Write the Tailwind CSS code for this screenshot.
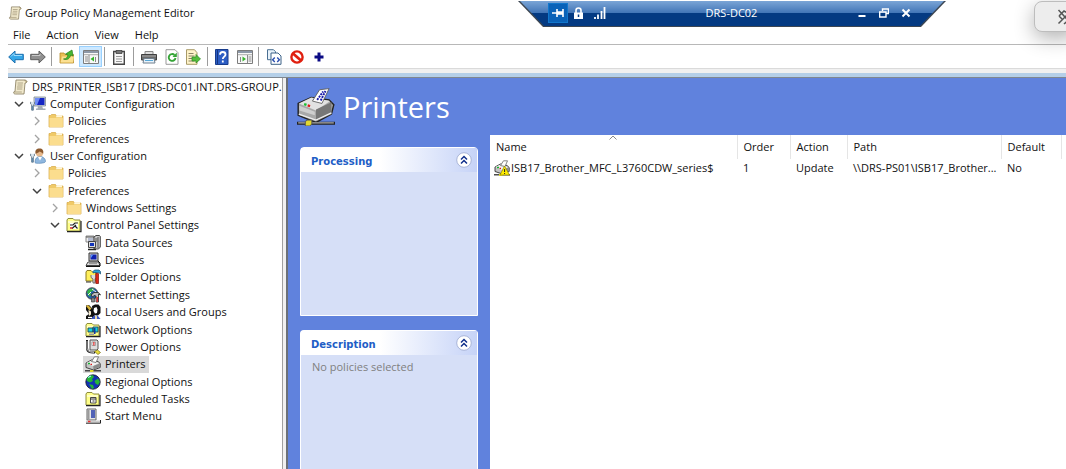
<!DOCTYPE html>
<html lang="en">
<head>
  <meta charset="UTF-8">
  <title>Group Policy Management Editor</title>
  <meta name="viewport" content="width=device-width, initial-scale=1.0">
  <script src="https://cdn.jsdelivr.net/npm/@tailwindcss/browser@4"></script>
</head>
<body class="relative flex flex-col h-screen overflow-hidden bg-white pl-2 font-['Open_Sans','Noto_Sans',sans-serif] text-[11px] leading-4 text-[#111]">

  <!-- shared icons -->
  <svg class="hidden">
    <symbol id="scroll" viewBox="0 0 16 16">
      <path d="M4 1h9.500l1.500 1.500-1 1.500h-1l-1 11H3.500C1 15 1 12.500 3 12.500Z" fill="#f1e9cc" stroke="#8f8468" stroke-width=".9"/>
      <path d="M12.500 1.500c2-.5 2.800 1.500 1.200 2.300" fill="#cfc092" stroke="#8f8468" stroke-width=".7"/>
      <path d="M5.500 4h5.500M5.500 6h5.200M5 8h5.500M5 10h5.300M1.800 13h8" stroke="#a89d80" stroke-width=".9"/>
    </symbol>
    <symbol id="folder" viewBox="0 0 16 16">
      <path d="M1 14V2.500h1.500L3.500 1.500h4l1 1.500H15v11Z" fill="#f0ca68" stroke="#d6a842" stroke-width=".7"/>
      <path d="M8.500 2.200h5.500v2H8Z" fill="#fff7dc"/>
      <path d="M1.500 5h13.300v9H1.500Z" fill="#fbdd8e"/>
    </symbol>
    <symbol id="down" viewBox="0 0 10 10"><path d="M1 3l4 4 4-4" fill="none" stroke="#404040" stroke-width="1.500"/></symbol>
    <symbol id="right" viewBox="0 0 10 10"><path d="M3 1l4 4-4 4" fill="none" stroke="#a3a3a3" stroke-width="1.300"/></symbol>
    <symbol id="wrench" viewBox="0 0 6 12">
      <path d="M.7 1v2.500L2 4.700V11h2V4.700l1.300-1.200V1" fill="#dbe6ee" stroke="#4c6274" stroke-width=".9"/>
      <path d="M2 6h2v5H2Z" fill="#5f87a8"/>
    </symbol>
    <symbol id="computer" viewBox="0 0 16 16">
      <path d="M4 1h11.500v9H4Z" fill="#cfd6dd" stroke="#7f8a96" stroke-width=".8"/>
      <path d="M5 2h9.500v7H5Z" fill="#1526c4"/><path d="M5 2h5L7 9H5Z" fill="#6f8df5"/>
      <path d="M8 10h4l1 2.500h2.500V14H6v-1.500h1.500Z" fill="#a4adb6"/>
      <use href="#wrench" x="0" y="5" width="5" height="10"/>
    </symbol>
    <symbol id="user" viewBox="0 0 16 16">
      <path d="M5 14.500c0-4 2-6 5-6s5.500 2 5.500 5c0 2-10.500 2.500-10.500 1Z" fill="#8fb7df" stroke="#4f80b0" stroke-width=".6"/>
      <path d="M8 9l2 3.500L12 9Z" fill="#fff"/>
      <circle cx="9.500" cy="5" r="3.600" fill="#e7b98c"/>
      <path d="M5.700 6C4.500 2 7 .5 9.500.6c3 0 4.500 2 3.600 5.400-1-1.500-2-2-3.500-2.500-1 1.200-2.500 1.500-3.900 2.500Z" fill="#8c5a30"/>
      <use href="#wrench" x="0" y="5" width="5" height="10"/>
    </symbol>
    <symbol id="yfolder" viewBox="0 0 16 16">
      <path d="M1 14V3l1-1.500h5L8.500 3H14v11Z" fill="#ffff8a" stroke="#8c8c3c"/>
      <path d="M1 14.700h14V4" fill="none" stroke="#222" stroke-width="1.200"/>
      <path d="M2 5h11" stroke="#fff"/>
    </symbol>
    <symbol id="control" viewBox="0 0 16 16">
      <use href="#yfolder" width="16" height="16"/>
      <path d="M4 6h8v6H4Z" fill="#fff"/>
      <path d="M4 8h3l2-2h3M6 11.500l4-3.500M9 9l2.500 2.500" fill="none" stroke="#222" stroke-width="1.200"/><path d="M4 11h2.500" stroke="#d22" stroke-width="1.500"/>
    </symbol>
    <symbol id="data" viewBox="0 0 16 16">
      <path d="M1 1h8v6H1Z" fill="#eee" stroke="#888"/><path d="M1 2h8" stroke="#555"/><path d="M3 4h5M3 6h5" stroke="#7a88b0"/>
      <path d="M9 2l2-1.500h3.500l.8 1V12L13.500 14H9Z" fill="#c8c8c8" stroke="#333" stroke-width=".9"/>
      <path d="M13 2v11M10 4h2.500M10 6h2.500" stroke="#555"/>
      <path d="M3.500 6.500h7v6h-7Z" fill="#dedede" stroke="#444"/><path d="M5 8h4v3H5Z" fill="#13b"/>
      <path d="M3 14.500h8" stroke="#222" stroke-width="1.500"/>
    </symbol>
    <symbol id="devices" viewBox="0 0 16 16">
      <path d="M4 1h9v8H4Z" fill="#cfcfcf" stroke="#333"/><path d="M5.500 2.500h6v5h-6Z" fill="#1020b0"/><path d="M6 3h2l-2 3Z" fill="#59f"/>
      <path d="M3 10h10.500l1.500 3.500H1Z" fill="#ddd" stroke="#444"/><path d="M4 11.700h8" stroke="#888"/>
      <path d="M1 14.500h14M13 9l2 2v3" fill="none" stroke="#111"/>
    </symbol>
    <symbol id="folderopt" viewBox="0 0 16 16">
      <path d="M1 12V3l1-1.500h4L7.500 3H11v9Z" fill="#ffef5a" stroke="#8c7a20"/>
      <path d="M8 4V2.500L9.500 1H14l1.500 1.500V5l-1.700-1.500h-4Z" fill="#2ba4d8" stroke="#134e74" stroke-width=".7"/>
      <path d="M6 6v2.500L8 10v4h2v-4l1-1.500V6" fill="#ddd" stroke="#555" stroke-width=".8"/>
      <path d="M10.800 4.500h2.700v10h-2.700Z" fill="#e02818" stroke="#801008" stroke-width=".7"/>
      <path d="M1 13h5" stroke="#333"/>
    </symbol>
    <symbol id="internet" viewBox="0 0 16 16">
      <circle cx="7" cy="6.500" r="5.800" fill="#2461a8" stroke="#333" stroke-width=".8"/>
      <path d="M2 5c1-3 4-4 7-3.500L8 4 5.500 5 6 8 4 9.500ZM9 6l3-1v3Z" fill="#31b345"/>
      <path d="M7 2l4 3M3 8l3-3" stroke="#eee"/>
      <path d="M6 8l3-2.500h4.500L15.500 8l-2-1v8H11V9l-2-.5-1.500 1.500Z" fill="#bbb" stroke="#222" stroke-width=".8"/>
      <path d="M11.500 10h1.500v5h-1.500Z" fill="#d33"/><path d="M6.500 11h3v4h-3Z" fill="#888" stroke="#333" stroke-width=".6"/>
    </symbol>
    <symbol id="users" viewBox="0 0 16 16">
      <path d="M1 1.500l3-.5 5 5 1 5-3 4H1V12l3-2-3-4Z" fill="#111"/><path d="M1 2l2-1 3.500 3.500-2 2Z" fill="#d8b53a"/><path d="M3.500 6l2.500 1.500v3L4 12Z" fill="#f3ead0"/>
      <path d="M7 2l3-1.500h3.500L15.500 3v6L13 11.500 9.500 11 7.500 7Z" fill="#111"/>
      <path d="M9 4l2.500-1 1 2.500L12 9l-2 .5L8.500 7Z" fill="#fff"/>
      <path d="M6 15l2.500-3 4-.5 3 3.500Z" fill="#3c57c2"/><path d="M3 13.500h4" stroke="#fff" stroke-width="1.300"/><path d="M10 12h2v3h-2Z" fill="#e8d7a0"/>
    </symbol>
    <symbol id="network" viewBox="0 0 16 16">
      <use href="#yfolder" width="16" height="16"/>
      <path d="M3 6h5v4H3ZM8 5h5v5H8Z" fill="#16d3e0" stroke="#245" stroke-width=".9"/><path d="M4 11.500h5v1.500H4Z" fill="#999"/><path d="M9 6h1.500v6H9Z" fill="#1438a8"/>
    </symbol>
    <symbol id="power" viewBox="0 0 16 16">
      <path d="M5 1h7l1 1v8l-1 1H5Z" fill="#ddd" stroke="#555"/><path d="M7 3h3.500v3.500H7Z" fill="#fff" stroke="#888" stroke-width=".7"/><path d="M8.300 3h1.200v3.500H8.300Z" fill="#d22"/>
      <path d="M2 1v8c0 4 3 5 8 4.500" fill="none" stroke="#222" stroke-width="2"/><path d="M2 2v7c0 3 3 4.500 7 4.500" fill="none" stroke="#ddd" stroke-width=".8"/>
      <path d="M9.500 12.500l3-1.500 3 2.500-2.500 2Z" fill="#e9dc3a" stroke="#776d10" stroke-width=".7"/>
    </symbol>
    <symbol id="printer" viewBox="0 0 32 32">
      <path d="M1 13L12 8l15 2 4 4-2 8-13 7L1 23Z" fill="#a9a9a9" stroke="#222" stroke-width="1.200"/>
      <path d="M1.500 13L12 8l16 3-12 8Z" fill="#e2e2e2"/><path d="M16 18l13-6v10l-13 6Z" fill="#777"/>
      <path d="M2 15l13 5v3L2 19Z" fill="#cfcfcf"/><path d="M1.500 22l14.500 5 13-6" fill="none" stroke="#eee" stroke-width="1.200"/>
      <path d="M13 11L19 1.500 27 .5 21 13Z" fill="#fff" stroke="#555" stroke-width=".7"/>
      <path d="M17 10l5-7M20 10.500l4-8" stroke="#1818a8" stroke-width="1.600" stroke-dasharray="1.700 .8"/>
      <path d="M6 13.500l2 .7" stroke="#18c030" stroke-width="2"/><path d="M9 14.700l2 .6" stroke="#e01818" stroke-width="2"/>
      <path d="M0 29.700h32" stroke="#222" stroke-width="2.400"/><path d="M1 29.300h30" stroke="#aaa"/>
      <path d="M7 28l2-1h3.500v3.500L10.500 32H7Z" fill="#e3d92e" stroke="#555" stroke-width=".8"/>
    </symbol>
    <symbol id="miniprinter" viewBox="0 0 16 16">
      <path d="M1 7l5.500-3L13 5.500l2.200 2v4L8.500 14 1 11.500Z" fill="#c4c4c4" stroke="#333" stroke-width=".9"/>
      <path d="M1.500 7l5-2.500L14 7l-6 3Z" fill="#f2f2f2"/><path d="M8.300 10l6.400-2.500v3.500l-6.400 2.600Z" fill="#8a8a8a"/>
      <path d="M6.500 5.500L9.500.8h4L11 6.500Z" fill="#fff" stroke="#666" stroke-width=".8"/>
      <path d="M3 7.500h2" stroke="#18b030" stroke-width="1.300"/><path d="M5.500 8.300h1.500" stroke="#e01818" stroke-width="1.200"/>
      <path d="M0 14.800h16" stroke="#222" stroke-width="1.200"/><path d="M5 14h3.500v2H5Z" fill="#e3d92e"/>
    </symbol>
    <symbol id="regional" viewBox="0 0 16 16">
      <circle cx="8" cy="8" r="7.200" fill="#1233b4" stroke="#112" stroke-width=".8"/>
      <path d="M2 4c2-2.500 4-3 6-2.800L9 3 7 5l1 2-3 1.500L2 7ZM9.500 7L13 4.500 15 8l-2 3-2.500-1.500ZM4 10l4 1 1 3-2 1Z" fill="#24b535"/>
      <path d="M3 3.500l3-1.500" stroke="#9fe" stroke-width="1.200"/>
    </symbol>
    <symbol id="tasks" viewBox="0 0 16 16">
      <use href="#yfolder" width="16" height="16"/>
      <path d="M5.500 6.500h5.500v5.500H5.500Z" fill="#fff" stroke="#444"/><path d="M6 8h5M7.500 10h2" stroke="#333"/>
    </symbol>
    <symbol id="start" viewBox="0 0 16 16">
      <path d="M2 1h9v11H2Z" fill="#e6e6e6" stroke="#666"/><path d="M2.500 1.500h2v10h-2Z" fill="#9a9a9a"/>
      <path d="M6 3h4M6 5h4M6 7h4M6 9h4" stroke="#2338a8" stroke-width="1.300"/>
      <path d="M1 12.500h14v2H1Z" fill="#ccc"/><path d="M1 15.200h14.500V12" fill="none" stroke="#222"/><path d="M3 13.500h2.500" stroke="#e33" stroke-width="1.500"/>
    </symbol>
    <symbol id="collapse" viewBox="0 0 16 16">
      <circle cx="8" cy="8" r="7.300" fill="#fff" stroke="#a9b5d8"/>
      <path d="M5 7.500l3-3 3 3M5 11.500l3-3 3 3" fill="none" stroke="#10308c" stroke-width="1.500"/>
    </symbol>
  </svg>

  <header>
    <div class="flex items-center gap-[3px] h-[25px]">
      <svg class="size-[14px]"><use href="#scroll"/></svg>
      <h1>Group Policy Management Editor</h1>
    </div>
    <nav class="flex items-center h-[19px] pl-[5px] gap-4">
      <button>File</button>
      <button>Action</button>
      <button>View</button>
      <button>Help</button>
    </nav>
    <div class="flex items-center h-6 border-t border-[#b8b8b8] text-[0px]">
      <button class="w-4" aria-label="Back"><svg class="size-4" viewBox="0 0 16 16"><path d="M.7 8l6.300-6v3.300h8.300v5.400H7V14Z" fill="#35a7e8" stroke="#1c6fae"/><path d="M3 7.500l3-3V6.500h8" fill="none" stroke="#9edbfb"/></svg></button>
      <button class="ml-[6px] w-4" aria-label="Forward"><svg class="size-4" viewBox="0 0 16 16"><path d="M15.300 8L9 2v3.300H.7v5.400H9V14Z" fill="#909090" stroke="#5e5e5e"/><path d="M2 6.500h8V5" fill="none" stroke="#c9c9c9"/></svg></button>
      <span class="ml-[5px] w-px h-[19px] bg-[#9c9c9c]"></span>
      <button class="ml-[7px] w-4" aria-label="Up one level"><svg class="size-4" viewBox="0 0 16 16"><path d="M1 14V4h4l1 1.500h8.500V14Z" fill="#e9bf55" stroke="#b58a2a" stroke-width=".8"/><path d="M1.500 13.500L3 7.500h12l-1 6Z" fill="#fbe092"/><path d="M4.500 10c3 0 4-2 4.500-4L6.500 5 13 1l1 6-2.200-1c-1 3.500-3.300 5.500-7.300 4Z" fill="#48b732" stroke="#25801c" stroke-width=".7"/></svg></button>
      <button class="ml-1 w-[23px] h-[21px] flex items-center justify-center bg-[#cce8ff] border border-[#99d1ff]" aria-label="Show or hide console tree"><svg class="size-4" viewBox="0 0 16 16"><path d="M.5 1.500h15v13H.5Z" fill="#f8f8f8" stroke="#7c7c7c"/><path d="M1 3h14" stroke="#8d98a8" stroke-width="2"/><path d="M1 5.700h14" stroke="#aaa"/><path d="M6 6v8M2 8h3M2 10h3M2 12h3M12.500 8v5" stroke="#8a8a8a"/><path d="M11 7.500v5L7.500 10Z" fill="#35b52c"/></svg></button>
      <span class="ml-[2px] w-px h-[19px] bg-[#9c9c9c]"></span>
      <button class="ml-[6px] w-4" aria-label="Paste"><svg class="size-4" viewBox="0 0 16 16"><path d="M2.700 2.500h10.600v12.800H2.700Z" fill="#f8f8f8" stroke="#474747" stroke-width="1.400"/><path d="M5 1.500h6v3H5Z" fill="#777" stroke="#333" stroke-width=".7"/><path d="M5 7.500h6M5 10h6M5 12.500h6" stroke="#999"/></svg></button>
      <span class="ml-[6px] w-px h-[19px] bg-[#9c9c9c]"></span>
      <button class="ml-[7px] w-4" aria-label="Print"><svg class="size-4" viewBox="0 0 16 16"><path d="M4 2.500h8V6H4Z" fill="#ddd" stroke="#888"/><path d="M.5 5.500h15V11H.5Z" fill="#6b6b6b" stroke="#3f3f3f"/><path d="M1 7h14" stroke="#aaa"/><path d="M3 9.500h10l1 4.500H2Z" fill="#e9f3fb" stroke="#70808e"/><path d="M4 11.500h8" stroke="#58a8d8"/></svg></button>
      <button class="ml-[7px] w-4" aria-label="Refresh"><svg class="size-4" viewBox="0 0 16 16"><path d="M2 .7h9l3 3v11.600H2Z" fill="#fff" stroke="#999"/><path d="M10.500 6A3.400 3.400 0 1 0 11.500 9" fill="none" stroke="#35a436" stroke-width="1.900"/><path d="M12.800 3.500v4.500H8.500Z" fill="#35a436"/></svg></button>
      <button class="ml-[5px] w-4" aria-label="Export list"><svg class="size-4" viewBox="0 0 16 16"><path d="M1.500.7h8l2.500 3v11.600H1.500Z" fill="#fff3c8" stroke="#a89a68"/><path d="M3.500 4.500h5M3.500 7h6M3.500 9.500h4M3.500 12h6" stroke="#8a8468"/><path d="M7 8h4V5.500l4.500 4.500-4.500 4V12H7Z" fill="#55bd3c" stroke="#2c8a20" stroke-width=".7"/></svg></button>
      <span class="ml-[6px] w-px h-[19px] bg-[#9c9c9c]"></span>
      <button class="ml-[6px] w-4" aria-label="Help"><svg class="size-4" viewBox="0 0 16 16"><path d="M1.500.5h12.500v15H1.500Z" fill="#2c5dc4" stroke="#183c8c"/><path d="M3.500 1v14" stroke="#15357f"/><path d="M6 5.700c0-3.700 5.500-3.500 5.500-.2 0 2-2.700 2.300-2.700 4.500M8.800 11.500v2" fill="none" stroke="#fff" stroke-width="1.800"/></svg></button>
      <button class="ml-[7px] w-4" aria-label="Show or hide action pane"><svg class="size-4" viewBox="0 0 16 16"><path d="M.5 1.500h15v13H.5Z" fill="#f8f8f8" stroke="#7c7c7c"/><path d="M1 3h14" stroke="#8d98a8" stroke-width="2"/><path d="M1 5.700h14" stroke="#aaa"/><path d="M10.500 6v8M11.500 8h3M11.500 10h3M11.500 12h3M3.500 8v5" stroke="#8a8a8a"/><path d="M5.500 7.500v5L9 10Z" fill="#35b52c"/></svg></button>
      <span class="ml-[5px] w-px h-[19px] bg-[#9c9c9c]"></span>
      <button class="ml-[7px] w-4" aria-label="View XML"><svg class="size-4" viewBox="0 0 16 16"><path d="M1.500.7h6l2 2v8h-8Z" fill="#e8f2fa" stroke="#4a6f92"/><path d="M5 4h7l3 3v8.300H5Z" fill="#fff" stroke="#3d6388"/><path d="M8.800 8.500L6.600 10.700l2.200 2.300M11.200 8.500l2.200 2.200-2.200 2.300" fill="none" stroke="#2c4fb0" stroke-width="1.400"/></svg></button>
      <button class="ml-[7px] w-4" aria-label="Disable"><svg class="size-4" viewBox="0 0 16 16"><circle cx="8" cy="8" r="5.600" fill="#fff" stroke="#e02010" stroke-width="2.400"/><path d="M4 4.500l8 7" stroke="#e02010" stroke-width="2.800"/></svg></button>
      <button class="ml-[6px] w-4" aria-label="Add"><svg class="size-4" viewBox="0 0 16 16"><path d="M8 3.500v9M3.500 8h9" stroke="#0a0a84" stroke-width="3"/></svg></button>
    </div>
    <div class="h-[9px] bg-[#f0f0f0] border-t border-[#dadada] border-b-4 border-b-[#b4cfe8]"></div>
  </header>

  <main class="flex flex-1 min-h-0 border-t border-[#7f8790]">
    <aside class="w-[275px] shrink-0 overflow-hidden border-r border-[#a0a0a0]">
      <ul class="flex flex-col justify-between h-[347px] whitespace-nowrap">
        <li class="flex items-center gap-1 h-[17px] pl-1"><svg class="size-4 shrink-0"><use href="#scroll"/></svg>DRS_PRINTER_ISB17 [DRS-DC01.INT.DRS-GROUP.COM]</li>
        <li class="flex items-center gap-1 h-[17px] pl-[6px]"><svg class="size-[10px] mr-[2px]"><use href="#down"/></svg><svg class="size-4"><use href="#computer"/></svg>Computer Configuration</li>
        <li class="flex items-center gap-1 h-[17px] pl-6"><svg class="size-[10px] mr-[2px]"><use href="#right"/></svg><svg class="size-4"><use href="#folder"/></svg>Policies</li>
        <li class="flex items-center gap-1 h-[17px] pl-6"><svg class="size-[10px] mr-[2px]"><use href="#right"/></svg><svg class="size-4"><use href="#folder"/></svg>Preferences</li>
        <li class="flex items-center gap-1 h-[17px] pl-[6px]"><svg class="size-[10px] mr-[2px]"><use href="#down"/></svg><svg class="size-4"><use href="#user"/></svg>User Configuration</li>
        <li class="flex items-center gap-1 h-[17px] pl-6"><svg class="size-[10px] mr-[2px]"><use href="#right"/></svg><svg class="size-4"><use href="#folder"/></svg>Policies</li>
        <li class="flex items-center gap-1 h-[17px] pl-6"><svg class="size-[10px] mr-[2px]"><use href="#down"/></svg><svg class="size-4"><use href="#folder"/></svg>Preferences</li>
        <li class="flex items-center gap-1 h-[17px] pl-[42px]"><svg class="size-[10px] mr-[2px]"><use href="#right"/></svg><svg class="size-4"><use href="#folder"/></svg>Windows Settings</li>
        <li class="flex items-center gap-1 h-[17px] pl-[42px]"><svg class="size-[10px] mr-[2px]"><use href="#down"/></svg><svg class="size-4"><use href="#control"/></svg>Control Panel Settings</li>
        <li class="flex items-center gap-1 h-[17px] pl-[77px]"><svg class="size-4"><use href="#data"/></svg>Data Sources</li>
        <li class="flex items-center gap-1 h-[17px] pl-[77px]"><svg class="size-4"><use href="#devices"/></svg>Devices</li>
        <li class="flex items-center gap-1 h-[17px] pl-[77px]"><svg class="size-4"><use href="#folderopt"/></svg>Folder Options</li>
        <li class="flex items-center gap-1 h-[17px] pl-[77px]"><svg class="size-4"><use href="#internet"/></svg>Internet Settings</li>
        <li class="flex items-center gap-1 h-[17px] pl-[77px]"><svg class="size-4"><use href="#users"/></svg>Local Users and Groups</li>
        <li class="flex items-center gap-1 h-[17px] pl-[77px]"><svg class="size-4"><use href="#network"/></svg>Network Options</li>
        <li class="flex items-center gap-1 h-[17px] pl-[77px]"><svg class="size-4"><use href="#power"/></svg>Power Options</li>
        <li class="flex h-[17px] pl-[75px]"><span class="flex items-center gap-1 pl-[2px] pr-1 bg-[#d9d9d9]"><svg class="size-4"><use href="#miniprinter"/></svg>Printers</span></li>
        <li class="flex items-center gap-1 h-[17px] pl-[77px]"><svg class="size-4"><use href="#regional"/></svg>Regional Options</li>
        <li class="flex items-center gap-1 h-[17px] pl-[77px]"><svg class="size-4"><use href="#tasks"/></svg>Scheduled Tasks</li>
        <li class="flex items-center gap-1 h-[17px] pl-[77px]"><svg class="size-4"><use href="#start"/></svg>Start Menu</li>
      </ul>
    </aside>
    <div class="w-[3px] shrink-0 bg-[#f0f0f0]"></div>

    <section class="flex flex-col flex-1 min-w-0 bg-[#6082dd] border-l-2 border-[#6b7078]">
      <div class="flex items-center h-[57px] pl-[9px] gap-2">
        <svg class="size-[38px]"><use href="#printer"/></svg>
        <h2 class="text-[29px] leading-9 text-white">Printers</h2>
      </div>
      <div class="flex flex-1 min-h-0">
        <div class="flex flex-col gap-[14px] w-[202px] shrink-0 pl-3 pr-[12px] pt-3">
          <div class="h-[169px] shrink-0 flex flex-col rounded-t-sm border border-white bg-[#d6dff7]">
            <div class="flex items-center justify-between h-6 pl-[10px] pr-[5px] bg-linear-to-r from-white from-45% to-[#c6d3f7]">
              <h3 class="pt-1 font-['DejaVu_Sans',sans-serif] font-bold text-[10px] text-[#215dc6]">Processing</h3>
              <button aria-label="Collapse processing"><svg class="size-4"><use href="#collapse"/></svg></button>
            </div>
          </div>
          <div class="flex-1 flex flex-col rounded-t-sm border border-b-0 border-white bg-[#d6dff7]">
            <div class="flex items-center justify-between h-6 pl-[10px] pr-[5px] bg-linear-to-r from-white from-45% to-[#c6d3f7]">
              <h3 class="pt-1 font-['DejaVu_Sans',sans-serif] font-bold text-[10px] text-[#215dc6]">Description</h3>
              <button aria-label="Collapse description"><svg class="size-4"><use href="#collapse"/></svg></button>
            </div>
            <p class="pl-[11px] pt-1 text-[#808080]">No policies selected</p>
          </div>
        </div>
        <div class="flex-1 min-w-0 bg-white">
          <table class="w-full table-fixed text-left">
            <colgroup>
              <col class="w-[247px]"><col class="w-[53px]"><col class="w-[57px]"><col class="w-[154px]"><col class="w-[60px]"><col>
            </colgroup>
            <thead>
              <tr class="h-6">
                <th class="relative font-normal pl-[6px] border-r border-[#e5e5e5]">Name
                  <svg class="absolute top-0 inset-x-0 mx-auto w-2 h-[5px]" viewBox="0 0 8 5"><path d="M.5 4.500L4 1l3.500 3.500" fill="none" stroke="#8a8a8a"/></svg>
                </th>
                <th class="font-normal pl-[6px] border-r border-[#e5e5e5]">Order</th>
                <th class="font-normal pl-[6px] border-r border-[#e5e5e5]">Action</th>
                <th class="font-normal pl-[6px] border-r border-[#e5e5e5]">Path</th>
                <th class="font-normal pl-[6px] border-r border-[#e5e5e5]">Default</th>
                <th></th>
              </tr>
            </thead>
            <tbody>
              <tr class="h-[18px] whitespace-nowrap">
                <td class="pl-1">
                  <div class="flex items-center gap-px">
                    <svg class="size-4" viewBox="0 0 16 16"><use href="#miniprinter" width="16" height="16"/><path d="M10.500 6l5 9H6Z" fill="#ffee00" stroke="#8c8400" stroke-width=".7"/><path d="M10.600 9v3M10.600 13v1" stroke="#222"/></svg>
                    ISB17_Brother_MFC_L3760CDW_series$
                  </div>
                </td>
                <td class="pl-[6px]">1</td>
                <td class="pl-[6px]">Update</td>
                <td class="pl-[6px] truncate">\\DRS-PS01\ISB17_Brother...</td>
                <td class="pl-[6px]">No</td>
                <td></td>
              </tr>
            </tbody>
          </table>
        </div>
      </div>
    </section>
  </main>

  <!-- remote desktop connection bar -->
  <div class="absolute top-px left-[518px] w-[428px] h-[26px] bg-[#3c4652] [clip-path:polygon(0_0,100%_0,403px_100%,25px_100%)]">
    <div class="flex items-center h-[25px] pl-[30px] pr-[29px] pb-px text-white bg-linear-to-b from-[#7ba5d6] via-[#3f73b5] via-50% to-[#043a82] to-50% [clip-path:polygon(2px_0,426px_0,402px_100%,26px_100%)]">
      <button class="size-5 flex items-center justify-center bg-[#0a62b8] border border-[#1177cc]" aria-label="Pin"><svg class="w-3 h-[10px]" viewBox="0 0 12 10"><path d="M0 5h5M5 1v8M11 1v8" stroke="#fff" stroke-width="1.600"/><path d="M5 5h6" stroke="#fff" stroke-width="3.400"/></svg></button>
      <svg class="ml-[5px] w-[11px] h-3" viewBox="0 0 11 12"><path d="M1 5.500h9V12H1Z" fill="#fff"/><path d="M3 6V3.500c0-3.300 5-3.300 5 0V6" fill="none" stroke="#fff" stroke-width="1.600"/><path d="M5.500 7.500v2.500" stroke="#043a82" stroke-width="1.500"/></svg>
      <svg class="ml-[10px] w-3 h-3" viewBox="0 0 12 12"><path d="M1 10v2M4 7.500V12M7.500 4v8M10.500 0v12" stroke="#fff" stroke-width="1.800"/></svg>
      <span class="flex-1 text-center pl-[6px]">DRS-DC02</span>
      <button class="w-[22px] flex justify-center" aria-label="Minimize"><svg class="size-[10px]" viewBox="0 0 10 10"><path d="M1.500 8h7" stroke="#fff" stroke-width="2"/></svg></button>
      <button class="w-[22px] flex justify-center" aria-label="Restore"><svg class="size-[10px]" viewBox="0 0 10 10"><path d="M3.500 3V1h6v4.500H7.500M.7 4h6.300v5H.7Z" fill="none" stroke="#fff" stroke-width="1.400"/></svg></button>
      <button class="w-[22px] flex justify-center" aria-label="Close"><svg class="size-[10px]" viewBox="0 0 10 10"><path d="M1.500 1.500l7 7M8.500 1.500l-7 7" stroke="#fff" stroke-width="2"/></svg></button>
    </div>
  </div>

  <!-- floating toolbar, runs off the right edge -->
  <button class="absolute top-px -right-3 w-11 h-[31px] pl-[22px] rounded-lg border border-[#bdbdbd] bg-[#ededed] shadow-[0_6px_20px_rgba(0,0,0,0.3)]" aria-label="Mute notifications">
    <svg class="w-4 h-4" viewBox="0 0 16 16"><path d="M1.500 1l13 14M2 7l5-5 5 3M1.500 14.500L10 6M7 15l4-3.500M2 7l4 4" fill="none" stroke="#555" stroke-width="1.500"/></svg>
  </button>
</body>
</html>
